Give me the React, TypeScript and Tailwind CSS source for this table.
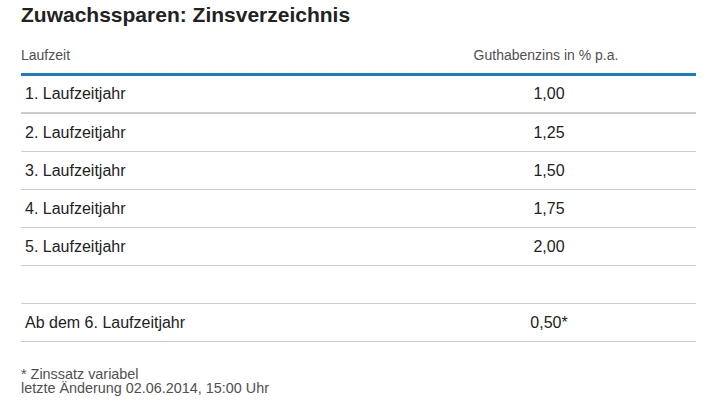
const rows = [
  { label: '1. Laufzeitjahr', rate: '1,00' },
  { label: '2. Laufzeitjahr', rate: '1,25' },
  { label: '3. Laufzeitjahr', rate: '1,50' },
  { label: '4. Laufzeitjahr', rate: '1,75' },
  { label: '5. Laufzeitjahr', rate: '2,00' },
]

function Row({ label, rate, first }: { label: string; rate: string; first?: boolean }) {
  return (
    <div
      className={`flex items-center h-[38px] text-[16px] text-[#222] border-[#cccccc] ${
        first ? 'border-b-2' : 'border-b'
      }`}
    >
      <div className="w-[375px] pl-[4px]">{label}</div>
      <div className="flex-1 text-center pl-[6px]">{rate}</div>
    </div>
  )
}

export default function App() {
  return (
    <div
      className="w-[717px] h-[404px] bg-white pl-[21px] overflow-hidden"
      style={{ fontFamily: '"Liberation Sans", Arial, sans-serif' }}
    >
      <div className="w-[675px]">
        {/* Title */}
        <h1 className="pt-[3px] text-[21px] leading-[24px] font-bold text-[#222]">
          Zuwachssparen: Zinsverzeichnis
        </h1>

        {/* Header */}
        <div className="flex items-end h-[49px] pb-[10px] text-[14px] leading-[16px] text-[#505050] border-b-[3px] border-[#1f79c3]">
          <div className="w-[375px]">Laufzeit</div>
          <div className="flex-1 text-center">Guthabenzins in % p.a.</div>
        </div>

        {/* Rows */}
        <div>
          {rows.map((r, i) => (
            <Row key={r.label} label={r.label} rate={r.rate} first={i === 0} />
          ))}
          <div className="h-[38px] border-b border-[#cccccc]" />
          <Row label="Ab dem 6. Laufzeitjahr" rate="0,50*" />
        </div>

        {/* Footer */}
        <div className="mt-[25px] text-[14.4px] leading-[14px] text-[#505050]">
          <p>* Zinssatz variabel</p>
          <p>letzte Änderung 02.06.2014, 15:00 Uhr</p>
        </div>
      </div>
    </div>
  )
}
